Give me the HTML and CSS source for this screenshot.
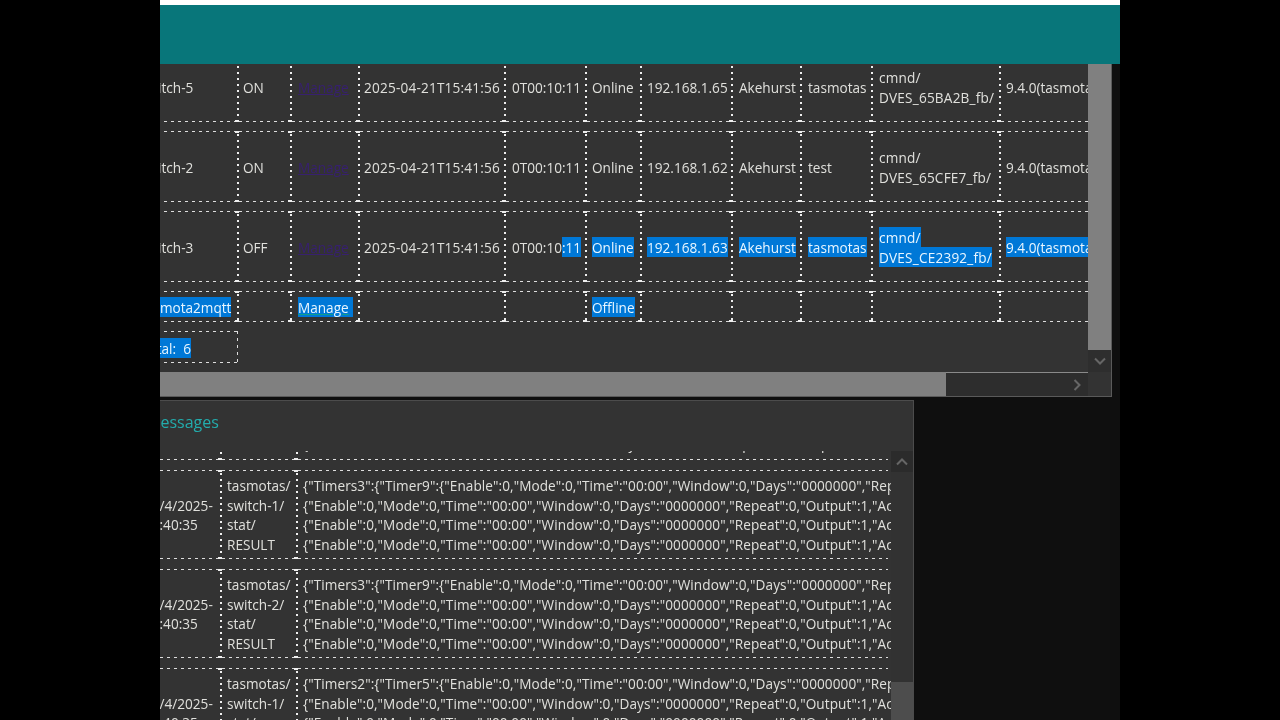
FILE: index.html
```html
<!DOCTYPE html>
<html lang="en">
<head>
<meta charset="utf-8">
<title>Devices and messages</title>
<link rel="stylesheet" href="styles.css">
</head>
<body>
<main class="stage">
  <div class="top-edge"></div>
  <header class="banner"></header>

  <section class="panel devices-panel">
    <div class="panel-main">
      <div class="viewport">
        <table class="grid devices">
          <colgroup>
            <col class="c1"><col class="c2"><col class="c3"><col class="c4"><col class="c5"><col class="c6">
            <col class="c7"><col class="c8"><col class="c9"><col class="c10"><col class="c11">
          </colgroup>
          <tbody>
            <tr class="tall">
              <td>switch-5</td><td>ON</td><td><a href="#" class="visited">Manage</a></td><td>2025-04-21T15:41:56</td><td>0T00:10:11</td><td>Online</td><td>192.168.1.65</td><td>Akehurst</td><td>tasmotas</td><td>cmnd/<br>DVES_65BA2B_fb/</td><td class="last">9.4.0(tasmotas)</td>
            </tr>
            <tr class="tall">
              <td>switch-2</td><td>ON</td><td><a href="#" class="visited">Manage</a></td><td>2025-04-21T15:41:56</td><td>0T00:10:11</td><td>Online</td><td>192.168.1.62</td><td>Akehurst</td><td>test</td><td>cmnd/<br>DVES_65CFE7_fb/</td><td class="last">9.4.0(tasmotas)</td>
            </tr>
            <tr class="tall">
              <td>switch-3</td><td>OFF</td><td><a href="#" class="visited">Manage</a></td><td>2025-04-21T15:41:56</td><td>0T00:10<span class="sel">:11</span></td><td><span class="sel">Online</span></td><td><span class="sel">192.168.1.63</span></td><td><span class="sel">Akehurst</span></td><td><span class="sel">tasmotas</span></td><td><span class="sel">cmnd/<br>DVES_CE2392_fb/</span></td><td class="last"><span class="sel">9.4.0(tasmotas)</span></td>
            </tr>
            <tr class="short">
              <td><span class="sel">tasmota2mqtt</span></td><td></td><td><a href="#" class="sel sel-link">Manage</a></td><td></td><td></td><td><span class="sel">Offline</span></td><td></td><td></td><td></td><td></td><td class="last"></td>
            </tr>
            <tr class="total-row">
              <td class="total"><span class="sel">Total:&nbsp; 6</span></td>
            </tr>
          </tbody>
        </table>
      </div>
      <div class="vscroll">
        <div class="vthumb"></div>
        <div class="vbutton">
          <svg width="12" height="8" viewBox="0 0 12 8"><path d="M1 1.5 6 6.5 11 1.5" class="chev"/></svg>
        </div>
      </div>
    </div>
    <div class="hscroll">
      <div class="hthumb"></div>
      <div class="htrack">
        <svg width="8" height="12" viewBox="0 0 8 12"><path d="M1.5 1 6.5 6 1.5 11" class="chev"/></svg>
      </div>
      <div class="corner"></div>
    </div>
  </section>

  <section class="panel messages-panel">
    <h2 class="panel-title">Messages</h2>
    <div class="messages-body">
      <div class="viewport">
        <table class="grid messages">
          <colgroup><col class="m1"><col class="m2"><col class="m3"></colgroup>
          <tbody>
            <tr>
              <td>21/4/2025-<br>16:40:35</td>
              <td>tasmotas/<br>switch-1/<br>stat/<br>RESULT</td>
              <td class="last payload">
                <div>{"Enable":0,"Mode":0,"Time":"00:00","Window":0,"Days":"0000000","Repeat":0,"Output":1,"Action":0}</div>
                <div>{"Enable":0,"Mode":0,"Time":"00:00","Window":0,"Days":"0000000","Repeat":0,"Output":1,"Action":0}</div>
                <div>{"Enable":0,"Mode":0,"Time":"00:00","Window":0,"Days":"0000000","Repeat":0,"Output":1,"Action":0}</div>
                <div>{<span class="tight">"Enable"</span>:0,"Mode":0,"Time":"00:00","Window":0,"Days":"0000000","Repeat":0,"Output":1,"Action":0}</div>
              </td>
            </tr>
            <tr>
              <td>21/4/2025-<br>16:40:35</td>
              <td>tasmotas/<br>switch-1/<br>stat/<br>RESULT</td>
              <td class="last payload">
                <div>{"Timers3":{"Timer9":{"Enable":0,"Mode":0,"Time":"00:00","Window":0,"Days":"0000000","Repeat":0}</div>
                <div>{"Enable":0,"Mode":0,"Time":"00:00","Window":0,"Days":"0000000","Repeat":0,"Output":1,"Action":0}</div>
                <div>{"Enable":0,"Mode":0,"Time":"00:00","Window":0,"Days":"0000000","Repeat":0,"Output":1,"Action":0}</div>
                <div>{"Enable":0,"Mode":0,"Time":"00:00","Window":0,"Days":"0000000","Repeat":0,"Output":1,"Action":0}</div>
              </td>
            </tr>
            <tr>
              <td>21/4/2025-<br>16:40:35</td>
              <td>tasmotas/<br>switch-2/<br>stat/<br>RESULT</td>
              <td class="last payload">
                <div>{"Timers3":{"Timer9":{"Enable":0,"Mode":0,"Time":"00:00","Window":0,"Days":"0000000","Repeat":0}</div>
                <div>{"Enable":0,"Mode":0,"Time":"00:00","Window":0,"Days":"0000000","Repeat":0,"Output":1,"Action":0}</div>
                <div>{"Enable":0,"Mode":0,"Time":"00:00","Window":0,"Days":"0000000","Repeat":0,"Output":1,"Action":0}</div>
                <div>{"Enable":0,"Mode":0,"Time":"00:00","Window":0,"Days":"0000000","Repeat":0,"Output":1,"Action":0}</div>
              </td>
            </tr>
            <tr>
              <td>21/4/2025-<br>16:40:35</td>
              <td>tasmotas/<br>switch-1/<br>stat/<br>RESULT</td>
              <td class="last payload">
                <div>{"Timers2":{"Timer5":{"Enable":0,"Mode":0,"Time":"00:00","Window":0,"Days":"0000000","Repeat":0}</div>
                <div>{"Enable":0,"Mode":0,"Time":"00:00","Window":0,"Days":"0000000","Repeat":0,"Output":1,"Action":0}</div>
                <div>{"Enable":0,"Mode":0,"Time":"00:00","Window":0,"Days":"0000000","Repeat":0,"Output":1,"Action":0}</div>
                <div>{"Enable":0,"Mode":0,"Time":"00:00","Window":0,"Days":"0000000","Repeat":0,"Output":1,"Action":0}</div>
              </td>
            </tr>
          </tbody>
        </table>
      </div>
      <div class="msg-scroll">
        <div class="msg-up">
          <svg width="12" height="8" viewBox="0 0 12 8"><path d="M1 6.5 6 1.5 11 6.5" class="chev"/></svg>
        </div>
        <div class="msg-track"></div>
        <div class="msg-thumb"></div>
      </div>
    </div>
  </section>
</main>
</body>
</html>
```

FILE: styles.css
```css
* { box-sizing: border-box; }
html, body { margin: 0; height: 100%; background: #000; overflow: hidden; }
body { font-family: "Open Sans", "Noto Sans", "Liberation Sans", sans-serif; }

.stage {
  width: 960px;
  height: 720px;
  margin: 0 auto;
  background: #0f0f0f;
  display: flex;
  flex-direction: column;
  overflow: hidden;
  filter: blur(0.3px);
}
.top-edge { height: 5px; background: #fff; flex: none; }
.banner { height: 59px; background: #08767a; flex: none; }

.panel { background: #333; color: #e0e0dc; font-size: 13.6px; line-height: 19.6px; }

.devices-panel {
  width: 952px;
  height: 333px;
  flex: none;
  display: flex;
  flex-direction: column;
  border-right: 1px solid #5a5a5a;
  border-bottom: 1px solid #5a5a5a;
}
.panel-main { flex: 1; display: flex; min-height: 0; }
.viewport { flex: 1; overflow: hidden; min-width: 0; }

.grid {
  table-layout: fixed;
  border-collapse: separate;
  white-space: nowrap;
}
.grid td {
  padding: 2px 0 0 5px;
  vertical-align: middle;
  background:
    linear-gradient(#eee, #eee) right top / 4px 2px no-repeat,
    linear-gradient(#eee, #eee) right bottom / 4px 2px no-repeat,
    repeating-linear-gradient(90deg, #dedede 0 3px, transparent 3px 7px) left top / 100% 1px no-repeat,
    repeating-linear-gradient(90deg, #dedede 0 3px, transparent 3px 7px) left bottom / 100% 1px no-repeat,
    repeating-linear-gradient(180deg, #f0f0f0 0 2px, transparent 2px 6px) right 3px / 2px 100% no-repeat;
}
.grid td.last {
  background:
    repeating-linear-gradient(90deg, #dedede 0 3px, transparent 3px 7px) left top / 100% 1px no-repeat,
    repeating-linear-gradient(90deg, #dedede 0 3px, transparent 3px 7px) left bottom / 100% 1px no-repeat;
}

/* Device table: scrolled 22px down and 24px right */
.devices {
  width: 1065px;
  border-spacing: 0 9px;
  margin: -22px 0 0 -24px;
}
.c1 { width: 103px; } .c2 { width: 53px; } .c3 { width: 68px; } .c4 { width: 146px; }
.c5 { width: 81px; } .c6 { width: 55px; } .c7 { width: 91px; } .c8 { width: 69px; }
.c9 { width: 71px; } .c10 { width: 128px; } .c11 { width: 200px; }

.tall td { height: 71px; }
.short td { height: 31px; }
.total-row td { height: 32px; }
.devices td:nth-child(2),
.devices td:nth-child(4) { padding-left: 4px; }
.devices td:nth-child(3),
.devices td:nth-child(5),
.devices td:nth-child(8),
.devices td:nth-child(9),
.devices td:nth-child(10) { padding-left: 6px; }
.devices td:nth-child(4),
.devices td:nth-child(10) { letter-spacing: 0.2px; }
.grid td.total {
  padding-top: 3px;
  background:
    repeating-linear-gradient(90deg, #dedede 0 3px, transparent 3px 7px) left top / 100% 1px no-repeat,
    repeating-linear-gradient(90deg, #dedede 0 3px, transparent 3px 7px) left bottom / 100% 1px no-repeat,
    repeating-linear-gradient(180deg, #dedede 0 3px, transparent 3px 7px) right 1px top / 1px 100% no-repeat;
}

a { color: #37206f; }
.sel { background: #0078d7; color: #e8f6ff; padding: 0.5px 0; }
a.sel-link { color: #e8f6ff; padding-right: 4px; text-decoration-color: #0fa08a; }

.vscroll { width: 23px; flex: none; display: flex; flex-direction: column; background: #333; }
.vthumb { flex: 1; background: #808080; }
.vbutton { height: 22px; flex: none; background: #2e2e2e; display: flex; align-items: center; justify-content: center; }
.chev { fill: none; stroke: #666; stroke-width: 2; }

.hscroll { height: 24px; flex: none; display: flex; }
.hthumb { width: 786px; flex: none; background: #808080; }
.htrack {
  flex: 1;
  background: #2d2d2d;
  border-top: 1px solid #8a8a8a;
  display: flex;
  align-items: center;
  justify-content: flex-end;
  padding-right: 7px;
}
.corner { width: 23px; flex: none; background: #333; }

.messages-panel {
  width: 754px;
  flex: 1;
  min-height: 0;
  margin-top: 3px;
  display: flex;
  flex-direction: column;
  border-top: 1px solid #4c4c4c;
  border-right: 1px solid #4c4c4c;
}
.panel-title {
  margin: 0 0 0 -14px;
  height: 50px;
  flex: none;
  font-size: 16px;
  font-weight: 400;
  line-height: 42px;
  color: #23acac;
}
.messages-body { flex: 1; display: flex; min-height: 0; }
.messages {
  width: 749px;
  border-spacing: 0 10px;
  margin: -90px 0 0 -21px;
  line-height: 19.5px;
}
.m1 { width: 83px; } .m2 { width: 76px; } .m3 { width: 590px; }
.messages td { height: 89px; padding-top: 1px; }
.messages tr:first-child .payload { padding-top: 0; padding-bottom: 3px; }
.payload { letter-spacing: 0.08px; }
.tight { letter-spacing: -1px; }

.msg-scroll { width: 22px; flex: none; display: flex; flex-direction: column; background: #323232; }
.msg-up { height: 21px; flex: none; background: #2b2b2b; display: flex; align-items: center; justify-content: center; }
.msg-track { height: 210px; flex: none; }
.msg-thumb { flex: 1; background: #4d4d4d; }
```
